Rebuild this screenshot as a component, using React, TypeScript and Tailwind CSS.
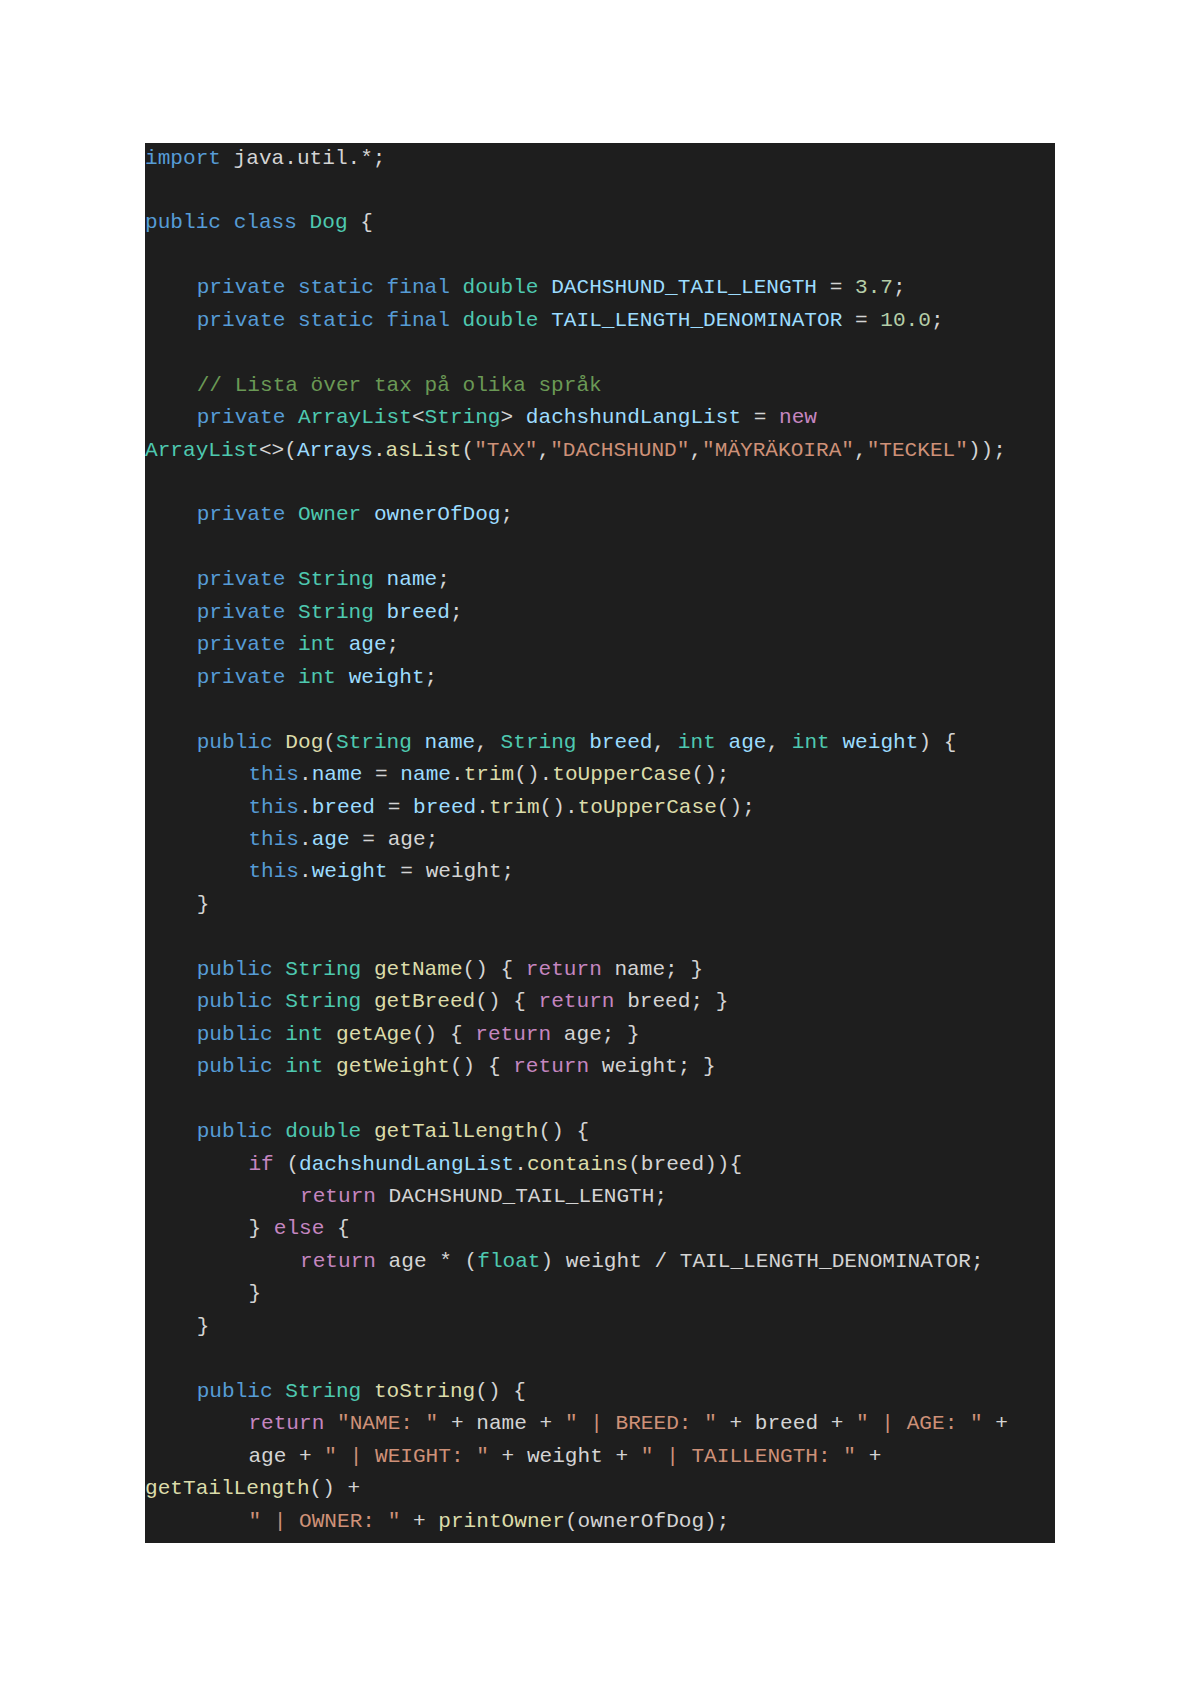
import React from "react";

type Seg = [string, string];
type Line = { i: number; s: Seg[] };

const C: Record<string, string> = {
  k: "text-[#569cd6]",
  t: "text-[#4ec9b0]",
  f: "text-[#dcdcaa]",
  s: "text-[#ce9178]",
  v: "text-[#9cdcfe]",
  c: "text-[#c586c0]",
  m: "text-[#6a9955]",
  n: "text-[#b5cea8]",
  d: "text-[#d4d4d4]",
};

const L = (i: number, ...s: Seg[]): Line => ({ i, s });
const B: Line = { i: 0, s: [] };

const lines: Line[] = [
  L(0, ["k", "import"], ["d", " java.util.*;"]),
  B,
  L(0, ["k", "public"], ["d", " "], ["k", "class"], ["d", " "], ["t", "Dog"], ["d", " {"]),
  B,
  L(1, ["k", "private static final"], ["d", " "], ["t", "double"], ["d", " "], ["v", "DACHSHUND_TAIL_LENGTH"], ["d", " = "], ["n", "3.7"], ["d", ";"]),
  L(1, ["k", "private static final"], ["d", " "], ["t", "double"], ["d", " "], ["v", "TAIL_LENGTH_DENOMINATOR"], ["d", " = "], ["n", "10.0"], ["d", ";"]),
  B,
  L(1, ["m", "// Lista över tax på olika språk"]),
  L(1, ["k", "private"], ["d", " "], ["t", "ArrayList"], ["d", "<"], ["t", "String"], ["d", "> "], ["v", "dachshundLangList"], ["d", " = "], ["c", "new"]),
  L(0, ["t", "ArrayList"], ["d", "<>("], ["v", "Arrays"], ["d", "."], ["f", "asList"], ["d", "("], ["s", "\"TAX\""], ["d", ","], ["s", "\"DACHSHUND\""], ["d", ","], ["s", "\"MÄYRÄKOIRA\""], ["d", ","], ["s", "\"TECKEL\""], ["d", "));"]),
  B,
  L(1, ["k", "private"], ["d", " "], ["t", "Owner"], ["d", " "], ["v", "ownerOfDog"], ["d", ";"]),
  B,
  L(1, ["k", "private"], ["d", " "], ["t", "String"], ["d", " "], ["v", "name"], ["d", ";"]),
  L(1, ["k", "private"], ["d", " "], ["t", "String"], ["d", " "], ["v", "breed"], ["d", ";"]),
  L(1, ["k", "private"], ["d", " "], ["t", "int"], ["d", " "], ["v", "age"], ["d", ";"]),
  L(1, ["k", "private"], ["d", " "], ["t", "int"], ["d", " "], ["v", "weight"], ["d", ";"]),
  B,
  L(1, ["k", "public"], ["d", " "], ["f", "Dog"], ["d", "("], ["t", "String"], ["d", " "], ["v", "name"], ["d", ", "], ["t", "String"], ["d", " "], ["v", "breed"], ["d", ", "], ["t", "int"], ["d", " "], ["v", "age"], ["d", ", "], ["t", "int"], ["d", " "], ["v", "weight"], ["d", ") {"]),
  L(2, ["k", "this"], ["d", "."], ["v", "name"], ["d", " = "], ["v", "name"], ["d", "."], ["f", "trim"], ["d", "()."], ["f", "toUpperCase"], ["d", "();"]),
  L(2, ["k", "this"], ["d", "."], ["v", "breed"], ["d", " = "], ["v", "breed"], ["d", "."], ["f", "trim"], ["d", "()."], ["f", "toUpperCase"], ["d", "();"]),
  L(2, ["k", "this"], ["d", "."], ["v", "age"], ["d", " = age;"]),
  L(2, ["k", "this"], ["d", "."], ["v", "weight"], ["d", " = weight;"]),
  L(1, ["d", "}"]),
  B,
  L(1, ["k", "public"], ["d", " "], ["t", "String"], ["d", " "], ["f", "getName"], ["d", "() { "], ["c", "return"], ["d", " name; }"]),
  L(1, ["k", "public"], ["d", " "], ["t", "String"], ["d", " "], ["f", "getBreed"], ["d", "() { "], ["c", "return"], ["d", " breed; }"]),
  L(1, ["k", "public"], ["d", " "], ["t", "int"], ["d", " "], ["f", "getAge"], ["d", "() { "], ["c", "return"], ["d", " age; }"]),
  L(1, ["k", "public"], ["d", " "], ["t", "int"], ["d", " "], ["f", "getWeight"], ["d", "() { "], ["c", "return"], ["d", " weight; }"]),
  B,
  L(1, ["k", "public"], ["d", " "], ["t", "double"], ["d", " "], ["f", "getTailLength"], ["d", "() {"]),
  L(2, ["c", "if"], ["d", " ("], ["v", "dachshundLangList"], ["d", "."], ["f", "contains"], ["d", "(breed)){"]),
  L(3, ["c", "return"], ["d", " DACHSHUND_TAIL_LENGTH;"]),
  L(2, ["d", "} "], ["c", "else"], ["d", " {"]),
  L(3, ["c", "return"], ["d", " age * ("], ["t", "float"], ["d", ") weight / TAIL_LENGTH_DENOMINATOR;"]),
  L(2, ["d", "}"]),
  L(1, ["d", "}"]),
  B,
  L(1, ["k", "public"], ["d", " "], ["t", "String"], ["d", " "], ["f", "toString"], ["d", "() {"]),
  L(2, ["c", "return"], ["d", " "], ["s", "\"NAME: \""], ["d", " + name + "], ["s", "\" | BREED: \""], ["d", " + breed + "], ["s", "\" | AGE: \""], ["d", " +"]),
  L(2, ["d", "age + "], ["s", "\" | WEIGHT: \""], ["d", " + weight + "], ["s", "\" | TAILLENGTH: \""], ["d", " +"]),
  L(0, ["f", "getTailLength"], ["d", "() +"]),
  L(2, ["s", "\" | OWNER: \""], ["d", " + "], ["f", "printOwner"], ["d", "(ownerOfDog);"]),
];

const IND = ["pl-0", "pl-[51.7px]", "pl-[103.4px]", "pl-[155px]"];

export default function App() {
  return (
    <div className="w-[1200px] h-[1694px] bg-white pt-[143px]">
      <div className="ml-[145px] w-[910px] h-[1400px] bg-[#1e1e1e] overflow-hidden">
        <div className="-mt-[1.5px] font-['Liberation_Mono','Courier_New',monospace] text-[21.1px] leading-[32.46px] whitespace-pre">
          {lines.map((ln, idx) => (
            <div key={idx} className={`h-[32.46px] ${IND[ln.i]}`}>
              {ln.s.map((sg, j) => (
                <span key={j} className={C[sg[0]]}>
                  {sg[1]}
                </span>
              ))}
            </div>
          ))}
        </div>
      </div>
    </div>
  );
}
